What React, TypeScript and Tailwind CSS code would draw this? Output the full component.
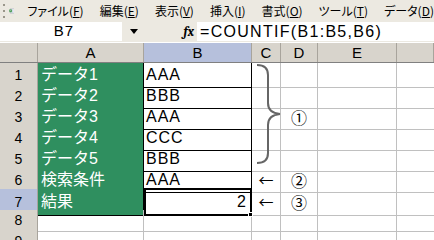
const menus: Array<[string, string]> = [
  ["ファイル", "F"],
  ["編集", "E"],
  ["表示", "V"],
  ["挿入", "I"],
  ["書式", "O"],
  ["ツール", "T"],
  ["データ", "D"],
];

const cols = ["A", "B", "C", "D", "E", ""];

const rows: Array<{ a: string; b: string; c?: string; d?: string }> = [
  { a: "データ1", b: "AAA" },
  { a: "データ2", b: "BBB" },
  { a: "データ3", b: "AAA", d: "①" },
  { a: "データ4", b: "CCC" },
  { a: "データ5", b: "BBB" },
  { a: "検索条件", b: "AAA", c: "←", d: "②" },
  { a: "結果", b: "2", c: "←", d: "③" },
  { a: "", b: "" },
  { a: "", b: "" },
];

const font = { fontFamily: '"Liberation Sans", "Noto Sans CJK JP", sans-serif' };
const cjk = { fontFamily: '"Noto Sans CJK JP", sans-serif' };

function MenuBar() {
  return (
    <div className="flex h-[21px] items-center bg-[#ece9e1] text-[12px] text-black [font-feature-settings:'palt']">
      <div className="ml-[3px] flex h-[14px] w-[2px] flex-col justify-between">
        <span className="h-[2px] w-[2px] bg-[#9a968a]" />
        <span className="h-[2px] w-[2px] bg-[#9a968a]" />
        <span className="h-[2px] w-[2px] bg-[#9a968a]" />
      </div>
      <svg width="18" height="16" viewBox="0 0 18 16" className="ml-[4px]">
        <rect x="5" y="1" width="12" height="14" fill="#fff" stroke="#7a8aa8" />
        <path d="M8 4h7M8 7h7M8 10h7M8 13h7M11 2v12" stroke="#9fb0cc" />
        <rect x="1" y="3" width="9" height="9" fill="#2f8a3f" />
        <path d="M3 5l5 5M8 5l-5 5" stroke="#fff" strokeWidth="1.5" />
      </svg>
      <div className="ml-[13px] flex gap-[16px]">
        {menus.map(([label, key]) => (
          <span key={key} className="whitespace-nowrap" style={cjk}>
            {label}(<span className="underline">{key}</span>)
          </span>
        ))}
      </div>
    </div>
  );
}

function FormulaBar() {
  return (
    <div className="flex h-[21px] items-center bg-[#ece9e1] text-[15px]">
      <div className="flex h-[19px] w-[122px] items-center justify-center bg-white pl-[6px] tracking-[1px]">B7</div>
      <div className="flex h-[19px] w-[23px] items-center justify-center">
        <svg width="8" height="5" viewBox="0 0 8 5">
          <path d="M0 0h8L4 5z" fill="#000" />
        </svg>
      </div>
      <div className="flex w-[52px] justify-end pr-[3px] font-serif text-[13px] font-bold italic">fx</div>
      <div className="flex h-[19px] flex-1 items-center bg-white pl-[3px] text-[16px] tracking-[1.3px]">=COUNTIF(B1:B5,B6)</div>
    </div>
  );
}

function Sheet() {
  const grid = "grid grid-cols-[38px_106px_108px_29px_37px_79px_1fr]";
  return (
    <div className="relative mt-[1px] text-[15px]">
      <div className={`${grid} h-[20px] border-b border-[#808080]`}>
        <div className="border-r border-[#a8a49c] bg-[#d8d4cc]" />
        {cols.map((c) => (
          <div
            key={c || "f"}
            className={`flex items-center justify-center border-r border-[#a8a49c] leading-none ${c === "B" ? "bg-[#b6c0dc]" : "bg-[#d8d4cc]"}`}
          >
            {c}
          </div>
        ))}
      </div>
      {rows.map((r, i) => {
        const n = i + 1;
        const filled = n <= 7;
        const selected = n === 7;
        return (
          <div key={n} className={`${grid} h-[21px]`}>
            <div
              className={`flex items-center justify-center border-r border-b border-[#a8a49c] text-[14px] ${selected ? "bg-[#b6c0dc]" : "bg-[#d8d4cc]"}`}
            >
              {n}
            </div>
            <div
              className={`flex items-center pl-[3px] text-[16px] ${filled ? "border-r border-b border-black bg-[#2f8f5f] text-white" : "border-r border-b border-[#c0c0c0]"}`}
            >
              {r.a}
            </div>
            {selected ? (
              <div className="relative -mt-[1px] flex items-center justify-end border-2 border-black pr-[4px] text-[16px]">
                {r.b}
                <span className="absolute -right-[3px] -bottom-[3px] h-[5px] w-[5px] border border-white bg-black" />
              </div>
            ) : (
              <div
                className={`flex items-center pl-[2px] text-[16px] tracking-[1px] ${filled ? "border-r border-b border-black" : "border-r border-b border-[#c0c0c0]"}`}
              >
                {r.b}
              </div>
            )}
            <div className="flex items-center justify-center border-r border-b border-[#c0c0c0] text-[15px]" style={cjk}>
              {r.c}
            </div>
            <div className="flex items-center justify-center border-r border-b border-[#c0c0c0] text-[16px]" style={cjk}>
              {r.d}
            </div>
            <div className="border-r border-b border-[#c0c0c0]" />
            <div className="border-b border-[#c0c0c0]" />
          </div>
        );
      })}
      <svg className="absolute left-0 top-0" width="434" height="200" viewBox="0 0 434 200">
        <path
          d="M257 22 Q268 22 268 32 V60 Q268 70 280 71 Q268 72 268 82 V110 Q268 120 257 120"
          fill="none"
          stroke="#666"
          strokeWidth="2"
        />
      </svg>
    </div>
  );
}

export default function App() {
  return (
    <div className="h-[240px] w-[434px] overflow-hidden bg-white" style={font}>
      <MenuBar />
      <FormulaBar />
      <Sheet />
    </div>
  );
}
